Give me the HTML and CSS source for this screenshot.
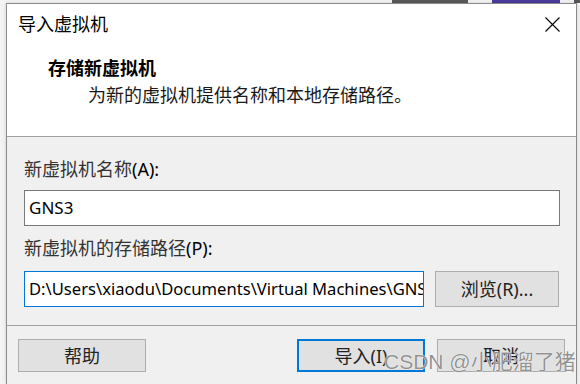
FILE: index.html
```html
<!DOCTYPE html>
<html lang="zh-CN">
<head>
  <meta charset="UTF-8">
  <meta name="viewport" content="width=device-width, initial-scale=1.0">
  <title>导入虚拟机</title>
  <link rel="stylesheet" href="styles.css">
</head>
<body>
  <div class="dialog">
    <div class="header">
      <div class="titlebar">
        <span class="title">导入虚拟机</span>
        <svg class="close" width="15" height="15" viewBox="0 0 15 15">
          <path d="M0.5 0.5 L14.5 14.5 M14.5 0.5 L0.5 14.5" stroke="#000" stroke-width="1.1" fill="none"/>
        </svg>
      </div>
      <div class="heading">存储新虚拟机</div>
      <div class="subheading">为新的虚拟机提供名称和本地存储路径。</div>
    </div>

    <div class="content">
      <label class="field-label" for="vmName">新虚拟机名称<span class="latin">(A):</span></label>
      <div class="textbox" id="vmName">GNS3</div>

      <label class="field-label label-path" for="vmPath">新虚拟机的存储路径<span class="latin">(P):</span></label>
      <div class="path-row">
        <div class="textbox focused" id="vmPath">D:\Users\xiaodu\Documents\Virtual Machines\GNS3</div>
        <button class="btn btn-browse">浏览(R)...</button>
      </div>
    </div>

    <div class="footer">
      <button class="btn">帮助</button>
      <div class="footer-right">
        <button class="btn btn-default">导入(I)</button>
        <button class="btn">取消</button>
      </div>
    </div>
  </div>

  <div class="watermark">CSDN @小肥溜了猪</div>
</body>
</html>
```

FILE: styles.css
```css
html, body { margin: 0; padding: 0; }
body {
  width: 580px; height: 384px; overflow: hidden; position: relative;
  font-family: "Noto Sans", "Noto Sans CJK SC", sans-serif;
  color: #1a1a1a;
  background-color: #f4f4f4;
  background-image: linear-gradient(to right, transparent 392px, #5a5a5a 392px, #5a5a5a 468px, transparent 468px, transparent 492px, #4c3c9e 492px, #4c3c9e 560px, transparent 560px, transparent 574px, #555 574px);
  background-size: 100% 3px;
  background-repeat: no-repeat;
}

.dialog {
  margin: 3px 0 0 6px; width: 569px; height: 380px;
  border: 1px solid #8a8a8a; border-bottom: none; background: #f0f0f0;
  box-shadow: 0 0 4px rgba(0,0,0,0.15);
}

.header { background: #fff; height: 132px; border-bottom: 1px solid #a0a0a0; }
.titlebar { height: 40px; display: flex; justify-content: space-between; align-items: center; padding: 0 16px 0 11px; }
.title { font-size: 18px; line-height: 24px; color: #000; }
.close { display: block; }
.heading { margin-top: 12px; padding-left: 41px; font-size: 18px; line-height: 24px; font-weight: bold; color: #000; }
.subheading { margin-top: 3px; padding-left: 81px; font-size: 18px; line-height: 24px; color: #1a1a1a; }

.content { padding: 20px 16px 18px 17px; border-bottom: 1px solid #a0a0a0; }
.field-label { display: block; font-size: 18px; line-height: 24px; color: #333; }
.field-label .latin { color: #000; }
.label-path { margin-top: 10px; }

.textbox {
  margin-top: 9px; height: 34px; box-sizing: content-box;
  border: 1px solid #7a7a7a; background: #fff;
  padding: 0 4px; font-size: 17px; line-height: 33px; color: #000;
  white-space: nowrap; overflow: hidden;
}
.path-row { display: flex; gap: 11px; margin-top: 11px; }
.path-row .textbox { margin-top: 0; width: 390px; font-size: 16.6px; }
.textbox.focused { border-color: #0078d7; }

.btn {
  font-family: "Noto Sans", "Noto Sans CJK SC", sans-serif;
  width: 128px; height: 33px; padding: 0;
  background: #e1e1e1; border: 1px solid #adadad; color: #222;
  font-size: 18px; line-height: 24px;
}
.btn-browse { width: 124px; height: 36px; }
.btn-default { border: 2px solid #0078d7; }

.footer { display: flex; justify-content: space-between; padding: 13px 11px 0 11px; }
.footer-right { display: flex; gap: 12px; }

.watermark {
  position: absolute; left: 384px; top: 349px;
  font-family: "Liberation Sans", "Noto Sans CJK SC", sans-serif;
  font-size: 21px; line-height: 26px; color: rgba(110,110,110,0.75);
  text-shadow: 0 0 1px #fff, 0 0 1px #fff;
  white-space: nowrap;
}
```
